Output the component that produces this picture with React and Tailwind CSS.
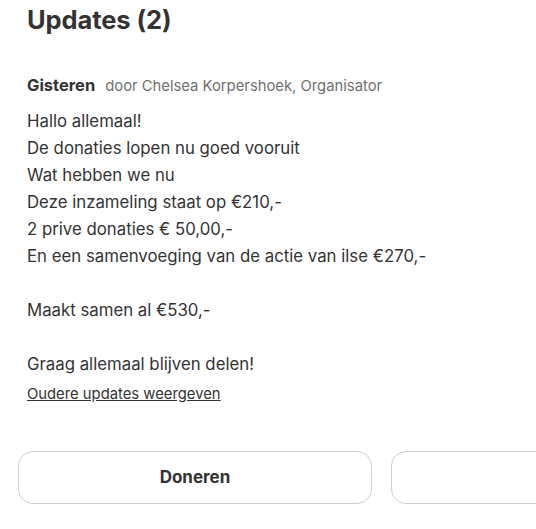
export default function App() {
  const lines = [
    "Hallo allemaal!",
    "De donaties lopen nu goed vooruit",
    "Wat hebben we nu",
    "Deze inzameling staat op €210,-",
    "2 prive donaties € 50,00,-",
    "En een samenvoeging van de actie van ilse €270,-",
    "\u00a0",
    "Maakt samen al €530,-",
    "\u00a0",
    "Graag allemaal blijven delen!",
  ];
  return (
    <div className="w-[536px] h-[529px] overflow-hidden bg-white text-[#333333] font-['Inter',sans-serif]">
      <div className="pl-[27px]">
        <h2 className="text-[25.5px] font-bold leading-[32px] pt-[4px] tracking-[-0.1px]">Updates (2)</h2>
        <div className="mt-[37px] flex items-baseline gap-[10px]">
          <span className="text-[16.5px] font-bold">Gisteren</span>
          <span className="text-[14.8px] text-[#6f6f6f]">door Chelsea Korpershoek, Organisator</span>
        </div>
        <div className="mt-[10px] text-[16.8px] leading-[27px]">
          {lines.map((l, i) => (
            <div key={i}>{l}</div>
          ))}
        </div>
        <a href="#" className="block mt-[6px] text-[14.8px] underline leading-[20px]">Oudere updates weergeven</a>
      </div>
      <div className="mt-[47px] flex gap-[19px] pl-[18px]">
        <button className="w-[354px] shrink-0 h-[53px] rounded-[15px] border border-[#cfcfcf] text-[17px] font-bold text-[#333333]">Doneren</button>
        <button className="w-[354px] shrink-0 h-[53px] rounded-[15px] border border-[#cfcfcf]"></button>
      </div>
    </div>
  );
}
